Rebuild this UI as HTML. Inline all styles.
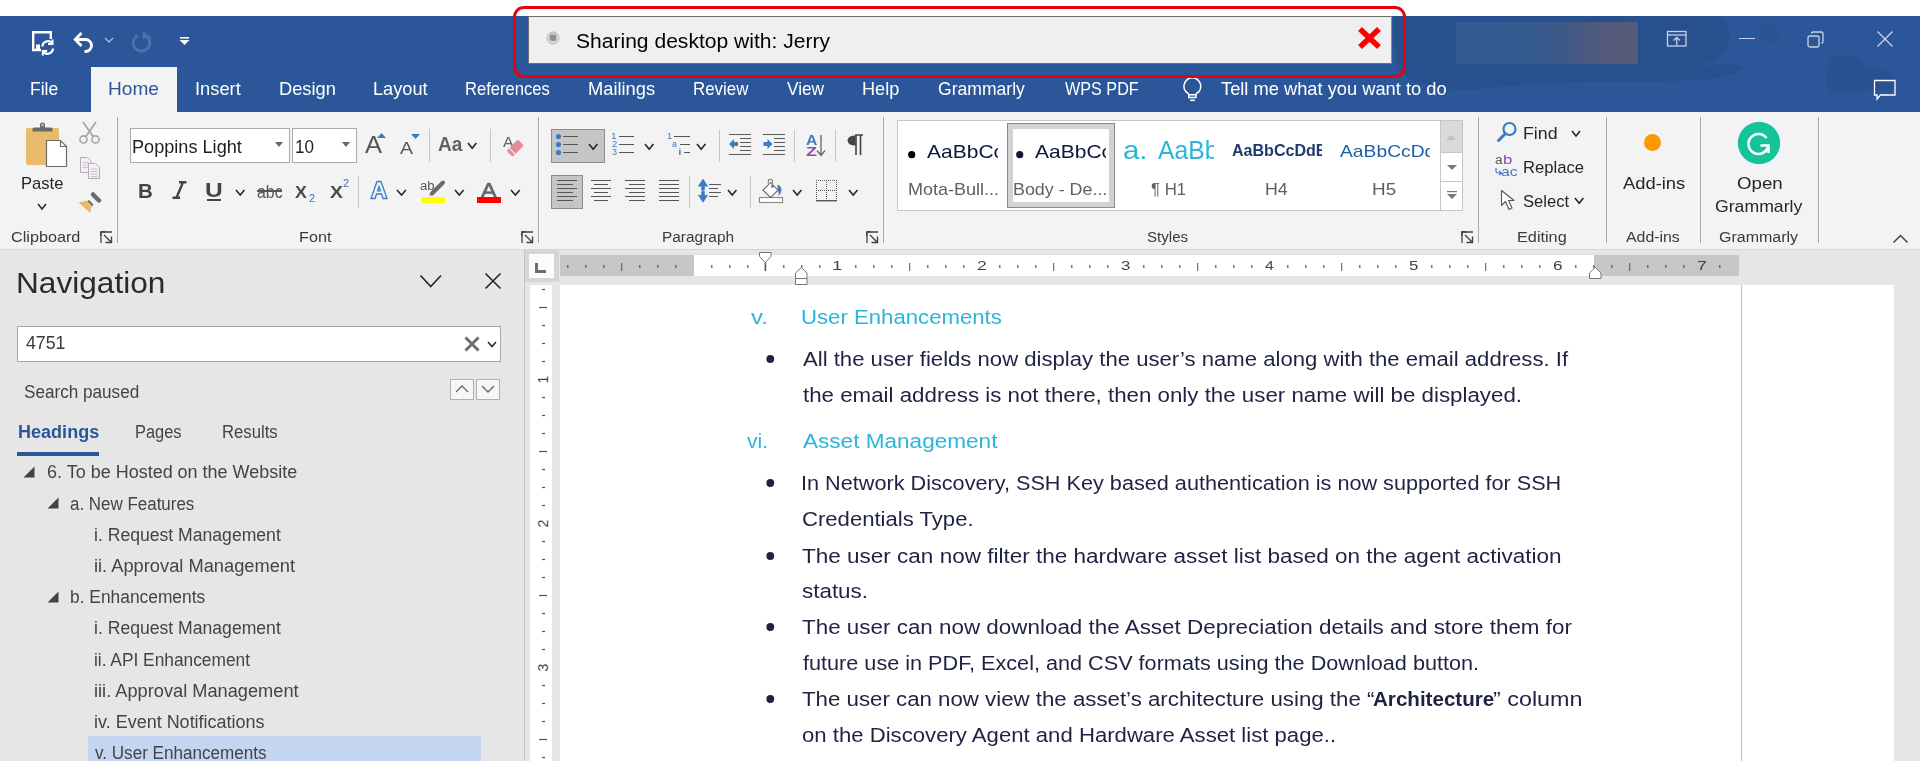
<!DOCTYPE html>
<html><head><meta charset="utf-8"><style>
html,body{margin:0;padding:0}
body{width:1920px;height:761px;overflow:hidden;position:relative;background:#f3f3f3;font-family:"Liberation Sans",sans-serif}
.t{position:absolute;white-space:nowrap;line-height:1}
.r{position:absolute;box-sizing:border-box}
.s{position:absolute;overflow:visible}
</style></head><body>
<div class="r" style="left:0px;top:0px;width:1920px;height:16px;background:#ffffff;"></div>
<div class="r" style="left:0px;top:16px;width:1920px;height:96px;background:#2b579a;"></div>
<svg class="s" style="left:0px;top:16px;" width="1920" height="96" viewBox="0 0 1920 96"><g fill="#29508e"><path d="M1395 0 H1722 Q1738 22 1722 38 Q1712 48 1690 52 Q1730 44 1744 50 Q1740 60 1700 64 Q1640 66 1590 66 Q1520 68 1490 72 Q1455 76 1430 70 Q1405 64 1398 50 Q1392 25 1395 0 Z"/><path d="M1780 0 H1660 Q1690 10 1700 0 Z"/><circle cx="1770" cy="18" r="10" opacity="0.6"/><path d="M1828 56 Q1826 40 1845 39 Q1862 39 1866 52 Q1886 50 1894 60 Q1898 70 1890 74 Q1860 74 1832 76 Q1822 70 1828 56 Z" opacity="0.8"/></g></svg>
<svg class="s" style="left:31px;top:30px;" width="24" height="24" viewBox="0 0 24 24"><path d="M10 20 H2.2 V2.2 H19.8 V9" fill="none" stroke="#fff" stroke-width="2.4"/><rect x="5" y="14.5" width="4" height="5.5" fill="#fff"/><path d="M11.3 16.5 A5.6 5.6 0 0 1 21 13" fill="none" stroke="#fff" stroke-width="2.2"/><path d="M21.5 9.5 V14 H17" fill="none" stroke="#fff" stroke-width="2"/><path d="M22 18.5 A5.6 5.6 0 0 1 12.3 22" fill="none" stroke="#fff" stroke-width="2.2"/><path d="M11.8 25.5 V21 H16.2" fill="none" stroke="#fff" stroke-width="2"/></svg>
<svg class="s" style="left:72px;top:30px;" width="26" height="24" viewBox="0 0 26 24"><path d="M4 9.5 H13.5 A6 6 0 0 1 13.5 21.5 H12.5" fill="none" stroke="#fff" stroke-width="2.8"/><path d="M9.5 3 L3.2 9.5 L9.5 16" fill="none" stroke="#fff" stroke-width="2.8"/></svg>
<svg class="s" style="left:104px;top:36px;" width="10" height="8" viewBox="0 0 10 8"><path d="M1 2 L5 6 L9 2" fill="none" stroke="#a9bcd8" stroke-width="1.3"/></svg>
<svg class="s" style="left:131px;top:30px;" width="22" height="24" viewBox="0 0 22 24"><path d="M14 5.2 A8.3 8.3 0 1 1 6.5 5.5" fill="none" stroke="#4a73ae" stroke-width="2.8"/><path d="M13 1.5 V7 H19.5" fill="none" stroke="#4a73ae" stroke-width="2.8"/></svg>
<svg class="s" style="left:178px;top:36px;" width="14" height="10" viewBox="0 0 14 10"><rect x="2" y="1" width="9" height="1.6" fill="#fff"/><path d="M1.5 4 H11.5 L6.5 9 Z" fill="#fff"/></svg>
<div class="r" style="left:528px;top:16px;width:864px;height:48px;background:#efefef;border:1px solid #6f6f6f;border-right-color:#8a8a8a;border-bottom-color:#707070"></div>
<svg class="s" style="left:546px;top:29px;" width="14" height="16" viewBox="0 0 14 16"><ellipse cx="7" cy="9" rx="6" ry="6" fill="#d6d6d6" stroke="#bdbdbd" stroke-width="1"/><ellipse cx="7" cy="6" rx="3.2" ry="3.5" fill="#c2c2c2"/><path d="M3.8 6 V11 Q7 13 10.2 11 V6" fill="#8f8f8f"/></svg>
<div class="t" style="left:576.05px;top:31.18px;font-size:20.5px;color:#000;font-weight:normal;font-style:normal;transform:scaleX(1.0272);transform-origin:0 0;">Sharing desktop with: Jerry</div>
<svg class="s" style="left:1357px;top:26px;" width="25" height="24" viewBox="0 0 25 24"><path d="M3 3 L22 21 M22 3 L3 21" stroke="#ff0000" stroke-width="5.5" stroke-linecap="butt"/></svg>
<div class="r" style="left:1456px;top:22px;width:182px;height:42px;background:linear-gradient(90deg,#345a93 0%,#355a90 38%,#3f5886 60%,#535a7c 82%,#575b79 100%)"></div>
<svg class="s" style="left:1666px;top:30px;" width="22" height="18" viewBox="0 0 22 18"><rect x="1.5" y="1.5" width="18.5" height="14.5" fill="none" stroke="#c6d1e4" stroke-width="1.3"/><path d="M1.5 5 H20" stroke="#c6d1e4" stroke-width="1.3"/><path d="M10.75 15.5 V8 M7.5 10.5 L10.75 7.5 L14 10.5" fill="none" stroke="#c6d1e4" stroke-width="1.3"/></svg>
<div class="r" style="left:1739px;top:37.5px;width:16px;height:1.2999999999999972px;background:#c6d1e4;"></div>
<svg class="s" style="left:1806px;top:30px;" width="20" height="19" viewBox="0 0 20 19"><rect x="2" y="6" width="11" height="11" rx="2" fill="none" stroke="#c6d1e4" stroke-width="1.3"/><path d="M5.5 3.5 Q5.5 2 7.5 2 H15 Q17 2 17 4 V11.5 Q17 13 15.5 13.5" fill="none" stroke="#c6d1e4" stroke-width="1.3"/></svg>
<svg class="s" style="left:1876px;top:30px;" width="18" height="18" viewBox="0 0 18 18"><path d="M1.5 1.5 L16.5 16.5 M16.5 1.5 L1.5 16.5" stroke="#c6d1e4" stroke-width="1.4"/></svg>
<svg class="s" style="left:1873px;top:79px;" width="24" height="22" viewBox="0 0 24 22"><path d="M1.5 1.5 H22 V16 H7.5 L4 20 V16 H1.5 Z" fill="none" stroke="#fff" stroke-width="1.3"/></svg>
<div class="r" style="left:91px;top:67px;width:86px;height:45px;background:#f3f3f3;"></div>
<div class="t" style="left:29.60px;top:79.58px;font-size:18.5px;color:#ffffff;font-weight:normal;font-style:normal;transform:scaleX(0.9464);transform-origin:0 0;">File</div>
<div class="t" style="left:107.97px;top:79.58px;font-size:18.5px;color:#2b579a;font-weight:normal;font-style:normal;transform:scaleX(1.0321);transform-origin:0 0;">Home</div>
<div class="t" style="left:195.35px;top:79.58px;font-size:18.5px;color:#ffffff;font-weight:normal;font-style:normal;transform:scaleX(0.9889);transform-origin:0 0;">Insert</div>
<div class="t" style="left:279.04px;top:79.58px;font-size:18.5px;color:#ffffff;font-weight:normal;font-style:normal;transform:scaleX(0.9881);transform-origin:0 0;">Design</div>
<div class="t" style="left:372.55px;top:79.58px;font-size:18.5px;color:#ffffff;font-weight:normal;font-style:normal;transform:scaleX(0.9828);transform-origin:0 0;">Layout</div>
<div class="t" style="left:464.67px;top:79.58px;font-size:18.5px;color:#ffffff;font-weight:normal;font-style:normal;transform:scaleX(0.8973);transform-origin:0 0;">References</div>
<div class="t" style="left:587.54px;top:79.58px;font-size:18.5px;color:#ffffff;font-weight:normal;font-style:normal;transform:scaleX(0.9883);transform-origin:0 0;">Mailings</div>
<div class="t" style="left:692.65px;top:79.58px;font-size:18.5px;color:#ffffff;font-weight:normal;font-style:normal;transform:scaleX(0.9122);transform-origin:0 0;">Review</div>
<div class="t" style="left:786.91px;top:79.58px;font-size:18.5px;color:#ffffff;font-weight:normal;font-style:normal;transform:scaleX(0.9324);transform-origin:0 0;">View</div>
<div class="t" style="left:862.15px;top:79.58px;font-size:18.5px;color:#ffffff;font-weight:normal;font-style:normal;transform:scaleX(0.9805);transform-origin:0 0;">Help</div>
<div class="t" style="left:938.12px;top:79.58px;font-size:18.5px;color:#ffffff;font-weight:normal;font-style:normal;transform:scaleX(0.9497);transform-origin:0 0;">Grammarly</div>
<div class="t" style="left:1064.92px;top:79.58px;font-size:18.5px;color:#ffffff;font-weight:normal;font-style:normal;transform:scaleX(0.8749);transform-origin:0 0;">WPS PDF</div>
<svg class="s" style="left:1182px;top:76px;" width="20" height="27" viewBox="0 0 20 27"><path d="M6.8 18.7 Q6.6 17.2 3.7 15.5 A8.45 8.45 0 1 1 17 15.5 Q14.1 17.2 13.9 18.7 Z" fill="none" stroke="#fff" stroke-width="1.5"/><path d="M6.8 18.7 V21.6 H13.9 V18.7" fill="none" stroke="#fff" stroke-width="1.5"/><path d="M8.3 24.3 H12.7" stroke="#fff" stroke-width="1.6"/></svg>
<div class="t" style="left:1221.13px;top:79.58px;font-size:18.5px;color:#ffffff;font-weight:normal;font-style:normal;transform:scaleX(0.9882);transform-origin:0 0;">Tell me what you want to do</div>
<div class="r" style="left:513px;top:6px;width:893px;height:72px;border:3px solid #e8000b;border-radius:11px;"></div>
<div class="r" style="left:0px;top:112px;width:1920px;height:137px;background:#f3f3f3;"></div>
<div class="r" style="left:0px;top:249px;width:1920px;height:1px;background:#d5d5d5;"></div>
<div class="r" style="left:117px;top:117px;width:1px;height:126px;background:#a8a8a8;"></div>
<div class="r" style="left:538px;top:117px;width:1px;height:126px;background:#a8a8a8;"></div>
<div class="r" style="left:883px;top:117px;width:1px;height:126px;background:#a8a8a8;"></div>
<div class="r" style="left:1478px;top:117px;width:1px;height:126px;background:#a8a8a8;"></div>
<div class="r" style="left:1606px;top:117px;width:1px;height:126px;background:#a8a8a8;"></div>
<div class="r" style="left:1700px;top:117px;width:1px;height:126px;background:#a8a8a8;"></div>
<div class="r" style="left:1818px;top:117px;width:1px;height:126px;background:#a8a8a8;"></div>
<div class="t" style="left:11.49px;top:229.32px;font-size:15.5px;color:#3a3a3a;font-weight:normal;font-style:normal;transform:scaleX(1.0456);transform-origin:0 0;">Clipboard</div>
<div class="t" style="left:299.00px;top:229.32px;font-size:15.5px;color:#3a3a3a;font-weight:normal;font-style:normal;transform:scaleX(1.0444);transform-origin:0 0;">Font</div>
<div class="t" style="left:662.27px;top:229.32px;font-size:15.5px;color:#3a3a3a;font-weight:normal;font-style:normal;transform:scaleX(0.9952);transform-origin:0 0;">Paragraph</div>
<div class="t" style="left:1147.32px;top:229.32px;font-size:15.5px;color:#3a3a3a;font-weight:normal;font-style:normal;transform:scaleX(0.9757);transform-origin:0 0;">Styles</div>
<div class="t" style="left:1517.40px;top:229.32px;font-size:15.5px;color:#3a3a3a;font-weight:normal;font-style:normal;transform:scaleX(1.0487);transform-origin:0 0;">Editing</div>
<div class="t" style="left:1626.40px;top:229.32px;font-size:15.5px;color:#3a3a3a;font-weight:normal;font-style:normal;transform:scaleX(1.0230);transform-origin:0 0;">Add-ins</div>
<div class="t" style="left:1718.50px;top:229.32px;font-size:15.5px;color:#3a3a3a;font-weight:normal;font-style:normal;transform:scaleX(1.0320);transform-origin:0 0;">Grammarly</div>
<svg class="s" style="left:100px;top:231px;" width="13" height="13" viewBox="0 0 13 13"><path d="M1 12 V1 H12" fill="none" stroke="#444" stroke-width="1.3" transform="translate(0,0)"/><path d="M0.7 0.7 V5 M0.7 0.7 H5" fill="none" stroke="#444" stroke-width="1.4"/><path d="M4 4 L11.5 11.5 M11.5 5.5 V11.5 H5.5" fill="none" stroke="#444" stroke-width="1.4"/></svg>
<svg class="s" style="left:521px;top:231px;" width="13" height="13" viewBox="0 0 13 13"><path d="M1 12 V1 H12" fill="none" stroke="#444" stroke-width="1.3" transform="translate(0,0)"/><path d="M0.7 0.7 V5 M0.7 0.7 H5" fill="none" stroke="#444" stroke-width="1.4"/><path d="M4 4 L11.5 11.5 M11.5 5.5 V11.5 H5.5" fill="none" stroke="#444" stroke-width="1.4"/></svg>
<svg class="s" style="left:866px;top:231px;" width="13" height="13" viewBox="0 0 13 13"><path d="M1 12 V1 H12" fill="none" stroke="#444" stroke-width="1.3" transform="translate(0,0)"/><path d="M0.7 0.7 V5 M0.7 0.7 H5" fill="none" stroke="#444" stroke-width="1.4"/><path d="M4 4 L11.5 11.5 M11.5 5.5 V11.5 H5.5" fill="none" stroke="#444" stroke-width="1.4"/></svg>
<svg class="s" style="left:1461px;top:231px;" width="13" height="13" viewBox="0 0 13 13"><path d="M1 12 V1 H12" fill="none" stroke="#444" stroke-width="1.3" transform="translate(0,0)"/><path d="M0.7 0.7 V5 M0.7 0.7 H5" fill="none" stroke="#444" stroke-width="1.4"/><path d="M4 4 L11.5 11.5 M11.5 5.5 V11.5 H5.5" fill="none" stroke="#444" stroke-width="1.4"/></svg>
<svg class="s" style="left:24px;top:121px;" width="46" height="50" viewBox="0 0 46 50"><rect x="2" y="7" width="33" height="37" rx="2" fill="#e9bc6b"/><path d="M8.5 10.5 V8 Q8.5 6.5 10 6.5 H16 V3.5 Q16 1.5 18.5 1.5 Q21 1.5 21 3.5 V6.5 H27 Q28.5 6.5 28.5 8 V10.5 Z" fill="#6b6b6b"/><circle cx="18.5" cy="4" r="1.3" fill="#e9bc6b"/><path d="M22.5 19.5 H36.5 L42.5 25.5 V45.5 H22.5 Z" fill="#fff" stroke="#6b6b6b" stroke-width="1.2"/><path d="M36.5 19.5 V25.5 H42.5" fill="none" stroke="#6b6b6b" stroke-width="1.2"/></svg>
<div class="t" style="left:21.37px;top:175.15px;font-size:17px;color:#262626;font-weight:normal;font-style:normal;transform:scaleX(0.9756);transform-origin:0 0;">Paste</div>
<svg class="s" style="left:37px;top:203px;" width="11" height="8" viewBox="0 0 11 8"><path d="M1 1 L5.0 6.0 L9.0 1" fill="none" stroke="#262626" stroke-width="1.5"/></svg>
<svg class="s" style="left:78px;top:121px;" width="23" height="24" viewBox="0 0 23 24"><path d="M5 1 L15.5 16 M18 1 L7.5 16" stroke="#a6a6a6" stroke-width="1.8"/><circle cx="5.5" cy="18.5" r="3.6" fill="none" stroke="#a6a6a6" stroke-width="1.6"/><circle cx="17.5" cy="18.5" r="3.6" fill="none" stroke="#a6a6a6" stroke-width="1.6"/></svg>
<svg class="s" style="left:79px;top:156px;" width="23" height="24" viewBox="0 0 23 24"><path d="M1.5 1.5 H8.5 L12 5 V16.5 H1.5 Z" fill="#f4f0f4" stroke="#b9a9b9" stroke-width="1"/><path d="M3.5 6.5 H10 M3.5 9 H10 M3.5 11.5 H10" stroke="#c9b9c9" stroke-width="0.9"/><path d="M9.5 7.5 H16.5 L20.5 11.5 V22.5 H9.5 Z" fill="#f4f0f4" stroke="#b9a9b9" stroke-width="1"/><path d="M11.5 13 H18.5 M11.5 15.5 H18.5 M11.5 18 H18.5 M11.5 20.5 H18.5" stroke="#c9b9c9" stroke-width="0.9"/></svg>
<svg class="s" style="left:77px;top:191px;" width="25" height="23" viewBox="0 0 25 23"><path d="M16 3.5 L22 9.5" stroke="#6b6b6b" stroke-width="4.5" stroke-linecap="round"/><path d="M12 9 L16.5 13.5 L15 15.5 L10 10.5 Z" fill="#6b6b6b"/><path d="M1.5 11.5 L10 9.5 L15 15 L13 22 Z" fill="#e9bc6b"/></svg>
<div class="r" style="left:130px;top:128px;width:160px;height:35px;background:#fff;border:1px solid #ababab"></div>
<div class="r" style="left:292px;top:128px;width:65px;height:35px;background:#fff;border:1px solid #ababab"></div>
<div class="t" style="left:132.35px;top:137.70px;font-size:18px;color:#1e1e1e;font-weight:normal;font-style:normal;transform:scaleX(1.0069);transform-origin:0 0;">Poppins Light</div>
<svg class="s" style="left:275px;top:142px;" width="8" height="5" viewBox="0 0 8 5"><path d="M0 0 H8 L4 5 Z" fill="#666"/></svg>
<div class="t" style="left:295.33px;top:137.70px;font-size:18px;color:#1e1e1e;font-weight:normal;font-style:normal;transform:scaleX(0.9444);transform-origin:0 0;">10</div>
<svg class="s" style="left:342px;top:142px;" width="8" height="5" viewBox="0 0 8 5"><path d="M0 0 H8 L4 5 Z" fill="#666"/></svg>
<div class="t" style="left:364.50px;top:134.45px;font-size:23px;color:#555;font-weight:normal;font-style:normal;transform:scaleX(1.1115);transform-origin:0 0;">A</div>
<svg class="s" style="left:377px;top:133px;" width="9" height="5" viewBox="0 0 9 5"><path d="M0 5 H9 L4.5 0 Z" fill="#3f7bc3"/></svg>
<div class="t" style="left:399.50px;top:139.55px;font-size:17px;color:#555;font-weight:normal;font-style:normal;transform:scaleX(1.1499);transform-origin:0 0;">A</div>
<svg class="s" style="left:411px;top:134px;" width="9" height="5" viewBox="0 0 9 5"><path d="M0 0 H9 L4.5 5 Z" fill="#3f7bc3"/></svg>
<div class="r" style="left:429px;top:129px;width:1px;height:33px;background:#c6c6c6;"></div>
<div class="t" style="left:438.02px;top:134.00px;font-size:20px;color:#626262;font-weight:bold;font-style:normal;transform:scaleX(0.9524);transform-origin:0 0;">Aa</div>
<svg class="s" style="left:467px;top:142px;" width="11" height="8" viewBox="0 0 11 8"><path d="M1 1 L5.2 6.2 L9.4 1" fill="none" stroke="#262626" stroke-width="1.6"/></svg>
<div class="r" style="left:490px;top:129px;width:1px;height:33px;background:#c6c6c6;"></div>
<div class="t" style="left:503.00px;top:133.75px;font-size:15px;color:#666;font-weight:normal;font-style:normal;transform:scaleX(1.0526);transform-origin:0 0;">A</div>
<svg class="s" style="left:504px;top:138px;" width="20" height="19" viewBox="0 0 20 19"><g transform="rotate(-45 11 10)"><rect x="3" y="6" width="16" height="8.5" rx="1.5" fill="#e58a9a"/><rect x="6.2" y="6" width="1.2" height="8.5" fill="#f3f3f3"/></g></svg>
<div class="t" style="left:138.17px;top:180.15px;font-size:21px;color:#444;font-weight:bold;font-style:normal;transform:scaleX(0.9758);transform-origin:0 0;">B</div>
<svg class="s" style="left:172px;top:181px;" width="15" height="18" viewBox="0 0 15 18"><path d="M7 1.2 H14.5 M0.5 16.8 H8 M11 1.2 L4.5 16.8" fill="none" stroke="#444" stroke-width="2.4"/></svg>
<div class="t" style="left:204.66px;top:180.00px;font-size:20px;color:#444;font-weight:normal;font-style:normal;transform:scaleX(1.2281);transform-origin:0 0;font-weight:600;">U</div>
<div class="r" style="left:207px;top:199px;width:14px;height:2px;background:#444;"></div>
<svg class="s" style="left:235px;top:189px;" width="11" height="8" viewBox="0 0 11 8"><path d="M1 1 L5.2 6.0 L9.4 1" fill="none" stroke="#262626" stroke-width="1.6"/></svg>
<div class="t" style="left:256.87px;top:182.70px;font-size:18px;color:#555;font-weight:normal;font-style:normal;transform:scaleX(0.8810);transform-origin:0 0;">abc</div>
<div class="r" style="left:257px;top:190px;width:25px;height:1.5px;background:#555;"></div>
<div class="t" style="left:295.32px;top:184.90px;font-size:16px;color:#4a4a4a;font-weight:bold;font-style:normal;transform:scaleX(1.1143);transform-origin:0 0;">X</div>
<div class="t" style="left:309.45px;top:193.07px;font-size:10.5px;color:#3a74bd;font-weight:normal;font-style:normal;transform:scaleX(1.0466);transform-origin:0 0;">2</div>
<div class="t" style="left:329.81px;top:184.90px;font-size:16px;color:#4a4a4a;font-weight:bold;font-style:normal;transform:scaleX(1.2112);transform-origin:0 0;">X</div>
<div class="t" style="left:343.45px;top:177.88px;font-size:10.5px;color:#3a74bd;font-weight:normal;font-style:normal;transform:scaleX(1.0466);transform-origin:0 0;">2</div>
<div class="r" style="left:358px;top:176px;width:1px;height:32px;background:#c6c6c6;"></div>
<svg class="s" style="left:369px;top:180px;" width="20" height="20" viewBox="0 0 20 20"><path d="M2 18.5 L8 1.5 H12 L18 18.5 H14 L12.5 14 H7.5 L6 18.5 Z M8.6 10.8 H11.4 L10 6.5 Z" fill="#eaf2fb" stroke="#3f7bc3" stroke-width="1.3"/></svg>
<svg class="s" style="left:396px;top:189px;" width="12" height="8" viewBox="0 0 12 8"><path d="M1 1 L5.5 6.0 L9.9 1" fill="none" stroke="#262626" stroke-width="1.6"/></svg>
<div class="t" style="left:420.48px;top:179.80px;font-size:12px;color:#555;font-weight:normal;font-style:normal;transform:scaleX(1.0922);transform-origin:0 0;">ab</div>
<svg class="s" style="left:426px;top:180px;" width="20" height="17" viewBox="0 0 20 17"><path d="M17 2.5 L6 13.5" stroke="#6a6a6a" stroke-width="4" stroke-linecap="round"/><path d="M3 16 L6 12 L8 14 Z" fill="#6a6a6a"/></svg>
<div class="r" style="left:421px;top:197px;width:24px;height:6px;background:#ffff00;"></div>
<svg class="s" style="left:454px;top:189px;" width="12" height="8" viewBox="0 0 12 8"><path d="M1 1 L5.3 6.0 L9.7 1" fill="none" stroke="#262626" stroke-width="1.6"/></svg>
<div class="t" style="left:480.50px;top:178.85px;font-size:21px;color:#666;font-weight:normal;font-style:normal;transform:scaleX(1.1099);transform-origin:0 0;-webkit-text-stroke:0.6px #666;">A</div>
<div class="r" style="left:477px;top:197px;width:24px;height:6px;background:#ff0000;"></div>
<svg class="s" style="left:510px;top:189px;" width="12" height="8" viewBox="0 0 12 8"><path d="M1 1 L5.4 6.0 L9.8 1" fill="none" stroke="#262626" stroke-width="1.6"/></svg>
<div class="r" style="left:551px;top:129px;width:54px;height:34px;background:#c5c5c5;border:1px solid #8c8c8c"></div>
<svg class="s" style="left:555px;top:133px;" width="25" height="6" viewBox="0 0 25 6"><circle cx="3.5" cy="3.5" r="2.6" fill="#3f7bc3"/><rect x="8" y="3" width="15" height="1" fill="#555"/></svg>
<svg class="s" style="left:555px;top:141px;" width="25" height="6" viewBox="0 0 25 6"><circle cx="3.5" cy="3.5" r="2.6" fill="#3f7bc3"/><rect x="8" y="3" width="15" height="1" fill="#555"/></svg>
<svg class="s" style="left:555px;top:149px;" width="25" height="6" viewBox="0 0 25 6"><circle cx="3.5" cy="3.5" r="2.6" fill="#3f7bc3"/><rect x="8" y="3" width="15" height="1" fill="#555"/></svg>
<svg class="s" style="left:588px;top:143px;" width="11" height="8" viewBox="0 0 11 8"><path d="M1 1 L5.2 6.3 L9.4 1" fill="none" stroke="#262626" stroke-width="1.6"/></svg>
<div class="t" style="left:611.26px;top:131.85px;font-size:9px;color:#3f7bc3;font-weight:normal;font-style:normal;transform:scaleX(1.0983);transform-origin:0 0;">1</div>
<div class="r" style="left:619px;top:136px;width:15px;height:1px;background:#555;"></div>
<div class="t" style="left:611.53px;top:139.85px;font-size:9px;color:#3f7bc3;font-weight:normal;font-style:normal;transform:scaleX(1.0501);transform-origin:0 0;">2</div>
<div class="r" style="left:619px;top:144px;width:15px;height:1px;background:#555;"></div>
<div class="t" style="left:611.64px;top:147.85px;font-size:9px;color:#3f7bc3;font-weight:normal;font-style:normal;transform:scaleX(1.0058);transform-origin:0 0;">3</div>
<div class="r" style="left:619px;top:152px;width:15px;height:1px;background:#555;"></div>
<svg class="s" style="left:644px;top:143px;" width="11" height="8" viewBox="0 0 11 8"><path d="M1 1 L5.2 6.3 L9.4 1" fill="none" stroke="#262626" stroke-width="1.6"/></svg>
<div class="t" style="left:666.81px;top:131.85px;font-size:9px;color:#3f7bc3;font-weight:normal;font-style:normal;transform:scaleX(1.0217);transform-origin:0 0;">1</div>
<div class="t" style="left:672.15px;top:139.85px;font-size:9px;color:#3f7bc3;font-weight:normal;font-style:normal;transform:scaleX(0.9709);transform-origin:0 0;">a</div>
<div class="t" style="left:678.42px;top:147.85px;font-size:9px;color:#3f7bc3;font-weight:normal;font-style:normal;transform:scaleX(1.8519);transform-origin:0 0;">i</div>
<div class="r" style="left:674px;top:136px;width:16px;height:1px;background:#555;"></div>
<div class="r" style="left:680px;top:144px;width:10px;height:1px;background:#555;"></div>
<div class="r" style="left:684px;top:152px;width:6px;height:1px;background:#555;"></div>
<svg class="s" style="left:696px;top:143px;" width="11" height="8" viewBox="0 0 11 8"><path d="M1 1 L5.2 6.3 L9.4 1" fill="none" stroke="#262626" stroke-width="1.6"/></svg>
<div class="r" style="left:719px;top:130px;width:1px;height:32px;background:#c6c6c6;"></div>
<svg class="s" style="left:728px;top:133px;" width="24" height="23" viewBox="0 0 24 23"><path d="M1 1.5 H23 M12 5.5 H23 M12 9.5 H23 M12 13.5 H23 M12 17.5 H23 M1 21.5 H23" stroke="#5a5a5a" stroke-width="1.2"/><path d="M1 11 L6 6 V9 H10 V13 H6 V16 Z" fill="#3f7bc3"/></svg>
<svg class="s" style="left:762px;top:133px;" width="24" height="23" viewBox="0 0 24 23"><path d="M1 1.5 H23 M12 5.5 H23 M12 9.5 H23 M12 13.5 H23 M12 17.5 H23 M1 21.5 H23" stroke="#5a5a5a" stroke-width="1.2"/><path d="M10.5 11 L5.5 6 V9 H1.5 V13 H5.5 V16 Z" fill="#3f7bc3"/></svg>
<div class="r" style="left:794px;top:130px;width:1px;height:32px;background:#c6c6c6;"></div>
<div class="t" style="left:805.81px;top:133.40px;font-size:14px;color:#3f7bc3;font-weight:bold;font-style:normal;transform:scaleX(1.1194);transform-origin:0 0;">A</div>
<div class="t" style="left:805.96px;top:145.25px;font-size:13px;color:#8a4bb5;font-weight:bold;font-style:normal;transform:scaleX(1.3860);transform-origin:0 0;">Z</div>
<svg class="s" style="left:816px;top:134px;" width="10" height="23" viewBox="0 0 10 23"><path d="M5 1 V21 M1 16.5 L5 21.5 L9 16.5" fill="none" stroke="#666" stroke-width="1.3"/></svg>
<div class="r" style="left:835px;top:130px;width:1px;height:32px;background:#c6c6c6;"></div>
<svg class="s" style="left:846px;top:134px;" width="18" height="22" viewBox="0 0 18 22"><path d="M9 1 H17 M10 1 V21 M14.5 1 V21" stroke="#444" stroke-width="1.6"/><path d="M9.5 1.5 Q2 1.5 1.5 6.5 Q2 11.5 9.5 11.5 Z" fill="#444"/></svg>
<div class="r" style="left:551px;top:175px;width:32px;height:34px;background:#c5c5c5;border:1px solid #8c8c8c"></div>
<svg class="s" style="left:557px;top:180px;" width="21" height="24" viewBox="0 0 21 24"><rect x="0" y="0" width="20" height="1" fill="#555"/><rect x="0" y="4" width="16" height="1" fill="#555"/><rect x="0" y="8" width="20" height="1" fill="#555"/><rect x="0" y="12" width="16" height="1" fill="#555"/><rect x="0" y="16" width="20" height="1" fill="#555"/><rect x="0" y="20" width="16" height="1" fill="#555"/></svg>
<svg class="s" style="left:591px;top:180px;" width="21" height="24" viewBox="0 0 21 24"><rect x="0" y="0" width="20" height="1" fill="#555"/><rect x="3" y="4" width="14" height="1" fill="#555"/><rect x="0" y="8" width="20" height="1" fill="#555"/><rect x="3" y="12" width="14" height="1" fill="#555"/><rect x="0" y="16" width="20" height="1" fill="#555"/><rect x="3" y="20" width="14" height="1" fill="#555"/></svg>
<svg class="s" style="left:625px;top:180px;" width="21" height="24" viewBox="0 0 21 24"><rect x="0" y="0" width="20" height="1" fill="#555"/><rect x="4" y="4" width="16" height="1" fill="#555"/><rect x="0" y="8" width="20" height="1" fill="#555"/><rect x="4" y="12" width="16" height="1" fill="#555"/><rect x="0" y="16" width="20" height="1" fill="#555"/><rect x="4" y="20" width="16" height="1" fill="#555"/></svg>
<svg class="s" style="left:659px;top:180px;" width="21" height="24" viewBox="0 0 21 24"><rect x="0" y="0" width="20" height="1" fill="#555"/><rect x="0" y="4" width="20" height="1" fill="#555"/><rect x="0" y="8" width="20" height="1" fill="#555"/><rect x="0" y="12" width="20" height="1" fill="#555"/><rect x="0" y="16" width="20" height="1" fill="#555"/><rect x="0" y="20" width="20" height="1" fill="#555"/></svg>
<div class="r" style="left:689px;top:176px;width:1px;height:32px;background:#c6c6c6;"></div>
<svg class="s" style="left:697px;top:178px;" width="26" height="26" viewBox="0 0 26 26"><path d="M6 1.2 L10.6 8.2 Q8.5 7.6 7.3 8.4 V12.2 H4.7 V8.4 Q3.5 7.6 1.4 8.2 Z M6 24.2 L10.6 17.2 Q8.5 17.8 7.3 17 V13.6 H4.7 V17 Q3.5 17.8 1.4 17.2 Z" fill="#3f7bc3" stroke="#3f7bc3" stroke-width="0.8" stroke-linejoin="round"/><path d="M12 6.5 H24 M12 10.5 H21 M12 14.5 H24 M12 18.5 H21" stroke="#5a5a5a" stroke-width="1.1"/></svg>
<svg class="s" style="left:727px;top:189px;" width="11" height="8" viewBox="0 0 11 8"><path d="M1 1 L5.2 6.0 L9.5 1" fill="none" stroke="#262626" stroke-width="1.6"/></svg>
<div class="r" style="left:750px;top:176px;width:1px;height:32px;background:#c6c6c6;"></div>
<svg class="s" style="left:758px;top:178px;" width="26" height="26" viewBox="0 0 26 26"><rect x="1.5" y="19.5" width="23" height="5" fill="#fff" stroke="#888" stroke-width="1.1"/><path d="M5 12.2 L12.6 4.7 L20 12.2 L12.6 19.5 Z" fill="#fff" stroke="#666" stroke-width="1.1"/><path d="M10.3 5.5 V2.8 Q10.3 1.3 12.3 1.3 Q14.3 1.3 14.3 2.8 V8" fill="none" stroke="#777" stroke-width="1.1"/><circle cx="14.3" cy="8.5" r="1.2" fill="#666"/><path d="M19.5 6.5 Q23.5 8 23.5 12 Q23.3 15.5 20.5 18 Q21 14 19.8 12 Z" fill="#3f7bc3"/></svg>
<svg class="s" style="left:792px;top:189px;" width="11" height="8" viewBox="0 0 11 8"><path d="M1 1 L5.2 6.0 L9.4 1" fill="none" stroke="#262626" stroke-width="1.6"/></svg>
<svg class="s" style="left:815px;top:179px;" width="23" height="23" viewBox="0 0 23 23"><g fill="#555"><rect x="1" y="1" width="1" height="1"/><rect x="1" y="11" width="1" height="1"/><rect x="3" y="1" width="1" height="1"/><rect x="3" y="11" width="1" height="1"/><rect x="5" y="1" width="1" height="1"/><rect x="5" y="11" width="1" height="1"/><rect x="7" y="1" width="1" height="1"/><rect x="7" y="11" width="1" height="1"/><rect x="9" y="1" width="1" height="1"/><rect x="9" y="11" width="1" height="1"/><rect x="11" y="1" width="1" height="1"/><rect x="11" y="11" width="1" height="1"/><rect x="13" y="1" width="1" height="1"/><rect x="13" y="11" width="1" height="1"/><rect x="15" y="1" width="1" height="1"/><rect x="15" y="11" width="1" height="1"/><rect x="17" y="1" width="1" height="1"/><rect x="17" y="11" width="1" height="1"/><rect x="19" y="1" width="1" height="1"/><rect x="19" y="11" width="1" height="1"/><rect x="21" y="1" width="1" height="1"/><rect x="21" y="11" width="1" height="1"/><rect x="1" y="1" width="1" height="1"/><rect x="11" y="1" width="1" height="1"/><rect x="21" y="1" width="1" height="1"/><rect x="1" y="3" width="1" height="1"/><rect x="11" y="3" width="1" height="1"/><rect x="21" y="3" width="1" height="1"/><rect x="1" y="5" width="1" height="1"/><rect x="11" y="5" width="1" height="1"/><rect x="21" y="5" width="1" height="1"/><rect x="1" y="7" width="1" height="1"/><rect x="11" y="7" width="1" height="1"/><rect x="21" y="7" width="1" height="1"/><rect x="1" y="9" width="1" height="1"/><rect x="11" y="9" width="1" height="1"/><rect x="21" y="9" width="1" height="1"/><rect x="1" y="11" width="1" height="1"/><rect x="11" y="11" width="1" height="1"/><rect x="21" y="11" width="1" height="1"/><rect x="1" y="13" width="1" height="1"/><rect x="11" y="13" width="1" height="1"/><rect x="21" y="13" width="1" height="1"/><rect x="1" y="15" width="1" height="1"/><rect x="11" y="15" width="1" height="1"/><rect x="21" y="15" width="1" height="1"/><rect x="1" y="17" width="1" height="1"/><rect x="11" y="17" width="1" height="1"/><rect x="21" y="17" width="1" height="1"/><rect x="1" y="19" width="1" height="1"/><rect x="11" y="19" width="1" height="1"/><rect x="21" y="19" width="1" height="1"/></g><rect x="1" y="21" width="21" height="1.4" fill="#555"/></svg>
<svg class="s" style="left:848px;top:189px;" width="11" height="8" viewBox="0 0 11 8"><path d="M1 1 L5.2 6.0 L9.5 1" fill="none" stroke="#262626" stroke-width="1.6"/></svg>
<div class="r" style="left:897px;top:120px;width:566px;height:91px;background:#fff;border:1px solid #c6c6c6"></div>
<div class="r" style="left:1007px;top:123px;width:108px;height:85px;border:1px solid #8a8a8a;box-shadow:inset 0 0 0 5px #d2d2d2"></div>
<div class="r" style="left:1440px;top:120px;width:23px;height:33px;background:#dadada;border:1px solid #c6c6c6"></div>
<div class="r" style="left:1440px;top:152px;width:23px;height:30px;background:#fff;border:1px solid #c6c6c6"></div>
<div class="r" style="left:1440px;top:181px;width:23px;height:30px;background:#fff;border:1px solid #c6c6c6"></div>
<svg class="s" style="left:1446px;top:135px;" width="10" height="6" viewBox="0 0 10 6"><path d="M0 5 H10 L5 0 Z" fill="#c0c0c0"/></svg>
<svg class="s" style="left:1447px;top:165px;" width="10" height="6" viewBox="0 0 10 6"><path d="M0 0 H10 L5 5 Z" fill="#777"/></svg>
<svg class="s" style="left:1447px;top:191px;" width="10" height="9" viewBox="0 0 10 9"><rect x="0" y="0" width="10" height="1.2" fill="#777"/><path d="M0 3 H10 L5 8 Z" fill="#777"/></svg>
<div style="position:absolute;left:900px;top:125px;width:98px;height:45px;overflow:hidden">
<svg class="s" style="left:8px;top:26px;" width="8" height="8" viewBox="0 0 8 8"><circle cx="3.7" cy="3.7" r="3.6" fill="#000"/></svg>
<div class="t" style="left:27.00px;top:16.55px;font-size:19px;color:#10163a;font-weight:normal;font-style:normal;transform:scaleX(1.1055);transform-origin:0 0;">AaBbCcDd</div>
</div>
<div style="position:absolute;left:1013px;top:125px;width:93px;height:45px;overflow:hidden">
<svg class="s" style="left:3px;top:26px;" width="8" height="8" viewBox="0 0 8 8"><circle cx="3.7" cy="3.7" r="3.6" fill="#10163a"/></svg>
<div class="t" style="left:22.00px;top:16.55px;font-size:19px;color:#10163a;font-weight:normal;font-style:normal;transform:scaleX(1.1055);transform-origin:0 0;">AaBbCcDd</div>
</div>
<div class="t" style="left:907.56px;top:180.95px;font-size:17px;color:#5f5f5f;font-weight:normal;font-style:normal;transform:scaleX(1.0597);transform-origin:0 0;">Mota-Bull...</div>
<div class="t" style="left:1013.37px;top:180.95px;font-size:17px;color:#5f5f5f;font-weight:normal;font-style:normal;transform:scaleX(1.0509);transform-origin:0 0;">Body - De...</div>
<div style="position:absolute;left:1120px;top:125px;width:94px;height:45px;overflow:hidden">
<div class="t" style="left:2.62px;top:12.55px;font-size:25px;color:#2bb5d9;font-weight:normal;font-style:normal;transform:scaleX(1.1771);transform-origin:0 0;">a.</div>
<div class="t" style="left:38.40px;top:12.55px;font-size:25px;color:#2bb5d9;font-weight:normal;font-style:normal;transform:scaleX(0.9877);transform-origin:0 0;">AaBbCc</div>
</div>
<div class="t" style="left:1150.73px;top:180.95px;font-size:17px;color:#5f5f5f;font-weight:normal;font-style:normal;transform:scaleX(0.9858);transform-origin:0 0;">¶ H1</div>
<div style="position:absolute;left:1225px;top:125px;width:97px;height:45px;overflow:hidden">
<div class="t" style="left:6.60px;top:18.40px;font-size:16px;color:#1e3a6f;font-weight:bold;font-style:normal;transform:scaleX(1.0023);transform-origin:0 0;">AaBbCcDdEe</div>
</div>
<div class="t" style="left:1264.58px;top:180.95px;font-size:17px;color:#5f5f5f;font-weight:normal;font-style:normal;transform:scaleX(1.0452);transform-origin:0 0;">H4</div>
<div style="position:absolute;left:1335px;top:125px;width:95px;height:45px;overflow:hidden">
<div class="t" style="left:4.90px;top:17.55px;font-size:17px;color:#1b5fa6;font-weight:normal;font-style:normal;transform:scaleX(1.1333);transform-origin:0 0;">AaBbCcDdEe</div>
</div>
<div class="t" style="left:1372.09px;top:181.25px;font-size:17px;color:#5f5f5f;font-weight:normal;font-style:normal;transform:scaleX(1.1103);transform-origin:0 0;">H5</div>
<svg class="s" style="left:1496px;top:121px;" width="22" height="22" viewBox="0 0 22 22"><circle cx="13.5" cy="8" r="6" fill="none" stroke="#3f7bc3" stroke-width="2.2"/><path d="M9.5 12.5 L2.5 19.5" stroke="#3f7bc3" stroke-width="3" stroke-linecap="round"/></svg>
<div class="t" style="left:1522.58px;top:125.05px;font-size:17px;color:#262626;font-weight:normal;font-style:normal;transform:scaleX(1.0458);transform-origin:0 0;">Find</div>
<svg class="s" style="left:1571px;top:130px;" width="11" height="8" viewBox="0 0 11 8"><path d="M1 1 L5.0 6.0 L9.0 1" fill="none" stroke="#262626" stroke-width="1.6"/></svg>
<div class="t" style="left:1494.96px;top:154.30px;font-size:12px;color:#555;font-weight:normal;font-style:normal;transform:scaleX(1.1327);transform-origin:0 0;">a</div>
<div class="t" style="left:1502.92px;top:154.30px;font-size:12px;color:#8a4bb5;font-weight:normal;font-style:normal;transform:scaleX(1.3889);transform-origin:0 0;">b</div>
<div class="t" style="left:1501.37px;top:164.95px;font-size:13px;color:#3f7bc3;font-weight:normal;font-style:normal;transform:scaleX(1.2044);transform-origin:0 0;">ac</div>
<svg class="s" style="left:1495px;top:168px;" width="8" height="8" viewBox="0 0 8 8"><path d="M1 0 V3.5 Q1 5 3 5 H6 M4 3 L6.5 5 L4 7" fill="none" stroke="#3f7bc3" stroke-width="1.2"/></svg>
<div class="t" style="left:1522.67px;top:159.05px;font-size:17px;color:#262626;font-weight:normal;font-style:normal;transform:scaleX(0.9790);transform-origin:0 0;">Replace</div>
<svg class="s" style="left:1500px;top:189px;" width="16" height="23" viewBox="0 0 16 23"><path d="M1.5 1.5 V16.5 L5.5 12.5 L9 20.5 L12 19 L8.5 11.5 L14 11.5 Z" fill="#fff" stroke="#555" stroke-width="1.1" stroke-linejoin="round"/></svg>
<div class="t" style="left:1522.75px;top:193.15px;font-size:17px;color:#262626;font-weight:normal;font-style:normal;transform:scaleX(0.9757);transform-origin:0 0;">Select</div>
<svg class="s" style="left:1574px;top:197px;" width="11" height="8" viewBox="0 0 11 8"><path d="M1 1 L5.2 6.3 L9.4 1" fill="none" stroke="#262626" stroke-width="1.6"/></svg>
<div class="r" style="left:1644px;top:134px;width:17px;height:17px;border-radius:50%;background:#ff9800;filter:blur(0.6px)"></div>
<div class="t" style="left:1622.80px;top:175.05px;font-size:17px;color:#262626;font-weight:normal;font-style:normal;transform:scaleX(1.0800);transform-origin:0 0;">Add-ins</div>
<svg class="s" style="left:1737px;top:121px;" width="44" height="44" viewBox="0 0 44 44"><circle cx="22" cy="22" r="21.2" fill="#15c39a"/><path d="M29.5 17 A10 10 0 1 0 31 26" fill="none" stroke="#fff" stroke-width="2.6"/><path d="M23.5 24.5 H31.5 V32" fill="none" stroke="#fff" stroke-width="2.6"/></svg>
<div class="t" style="left:1737.36px;top:175.05px;font-size:17px;color:#262626;font-weight:normal;font-style:normal;transform:scaleX(1.1009);transform-origin:0 0;">Open</div>
<div class="t" style="left:1715.32px;top:198.45px;font-size:17px;color:#262626;font-weight:normal;font-style:normal;transform:scaleX(1.0383);transform-origin:0 0;">Grammarly</div>
<svg class="s" style="left:1892px;top:234px;" width="17" height="10" viewBox="0 0 17 10"><path d="M1.5 8.5 L8.5 1.5 L15.5 8.5" fill="none" stroke="#444" stroke-width="1.5"/></svg>
<div class="r" style="left:0px;top:250px;width:524px;height:511px;background:#e6e6e6;"></div>
<div class="r" style="left:524px;top:250px;width:1px;height:511px;background:#c3c3c3;"></div>
<div class="t" style="left:16.27px;top:268.10px;font-size:30px;color:#2a2a2a;font-weight:normal;font-style:normal;transform:scaleX(1.0539);transform-origin:0 0;">Navigation</div>
<svg class="s" style="left:419px;top:274px;" width="24" height="15" viewBox="0 0 24 15"><path d="M1.5 1.5 L11.75 12.5 L22 1.5" fill="none" stroke="#262626" stroke-width="1.6"/></svg>
<svg class="s" style="left:484px;top:272px;" width="18" height="18" viewBox="0 0 18 18"><path d="M1.5 1.5 L16.5 16.5 M16.5 1.5 L1.5 16.5" stroke="#262626" stroke-width="1.6"/></svg>
<div class="r" style="left:17px;top:326px;width:484px;height:36px;background:#fff;border:1px solid #a8a8a8"></div>
<div class="t" style="left:25.65px;top:334.40px;font-size:18px;color:#3a3a3a;font-weight:normal;font-style:normal;transform:scaleX(0.9851);transform-origin:0 0;">4751</div>
<svg class="s" style="left:463px;top:335px;" width="18" height="18" viewBox="0 0 18 18"><path d="M2.5 2.5 L15.5 15.5 M15.5 2.5 L2.5 15.5" stroke="#6e6e6e" stroke-width="3"/></svg>
<svg class="s" style="left:487px;top:341px;" width="10" height="7" viewBox="0 0 10 7"><path d="M1 1 L5 5.5 L9 1" fill="none" stroke="#262626" stroke-width="1.5"/></svg>
<div class="t" style="left:23.93px;top:382.50px;font-size:18px;color:#444;font-weight:normal;font-style:normal;transform:scaleX(0.9515);transform-origin:0 0;">Search paused</div>
<div class="r" style="left:450px;top:379px;width:24px;height:21px;background:#f6f6f6;border:1px solid #b0b0b0"></div>
<div class="r" style="left:476px;top:379px;width:24px;height:21px;background:#f6f6f6;border:1px solid #b0b0b0"></div>
<svg class="s" style="left:454px;top:384px;" width="16" height="10" viewBox="0 0 16 10"><path d="M2 8 L8 2 L14 8" fill="none" stroke="#666" stroke-width="1.3"/></svg>
<svg class="s" style="left:480px;top:384px;" width="16" height="10" viewBox="0 0 16 10"><path d="M2 2 L8 8 L14 2" fill="none" stroke="#666" stroke-width="1.3"/></svg>
<div class="t" style="left:17.53px;top:422.70px;font-size:18px;color:#2b579a;font-weight:bold;font-style:normal;transform:scaleX(1.0024);transform-origin:0 0;">Headings</div>
<div class="r" style="left:17px;top:452px;width:82px;height:4px;background:#2b579a;"></div>
<div class="t" style="left:135.39px;top:422.70px;font-size:18px;color:#444;font-weight:normal;font-style:normal;transform:scaleX(0.9109);transform-origin:0 0;">Pages</div>
<div class="t" style="left:222.36px;top:422.70px;font-size:18px;color:#444;font-weight:normal;font-style:normal;transform:scaleX(0.9282);transform-origin:0 0;">Results</div>
<div class="r" style="left:88px;top:736px;width:393px;height:25px;background:#c3d5f0;"></div>
<div class="t" style="left:46.60px;top:463.40px;font-size:18px;color:#444;font-weight:normal;font-style:normal;transform:scaleX(0.9990);transform-origin:0 0;">6. To be Hosted on the Website</div>
<svg class="s" style="left:23px;top:465.7px;" width="12" height="12" viewBox="0 0 12 12"><path d="M11.5 0.5 V11.5 H0.5 Z" fill="#444"/></svg>
<div class="t" style="left:70.32px;top:495.00px;font-size:18px;color:#444;font-weight:normal;font-style:normal;transform:scaleX(0.9412);transform-origin:0 0;">a. New Features</div>
<svg class="s" style="left:47px;top:497.3px;" width="12" height="12" viewBox="0 0 12 12"><path d="M11.5 0.5 V11.5 H0.5 Z" fill="#444"/></svg>
<div class="t" style="left:94.06px;top:526.10px;font-size:18px;color:#444;font-weight:normal;font-style:normal;transform:scaleX(0.9773);transform-origin:0 0;">i. Request Management</div>
<div class="t" style="left:94.01px;top:557.20px;font-size:18px;color:#444;font-weight:normal;font-style:normal;transform:scaleX(1.0151);transform-origin:0 0;">ii. Approval Management</div>
<div class="t" style="left:69.87px;top:588.30px;font-size:18px;color:#444;font-weight:normal;font-style:normal;transform:scaleX(0.9651);transform-origin:0 0;">b. Enhancements</div>
<svg class="s" style="left:47px;top:590.6px;" width="12" height="12" viewBox="0 0 12 12"><path d="M11.5 0.5 V11.5 H0.5 Z" fill="#444"/></svg>
<div class="t" style="left:94.06px;top:619.40px;font-size:18px;color:#444;font-weight:normal;font-style:normal;transform:scaleX(0.9773);transform-origin:0 0;">i. Request Management</div>
<div class="t" style="left:94.07px;top:650.50px;font-size:18px;color:#444;font-weight:normal;font-style:normal;transform:scaleX(0.9625);transform-origin:0 0;">ii. API Enhancement</div>
<div class="t" style="left:94.02px;top:681.60px;font-size:18px;color:#444;font-weight:normal;font-style:normal;transform:scaleX(1.0125);transform-origin:0 0;">iii. Approval Management</div>
<div class="t" style="left:94.03px;top:712.70px;font-size:18px;color:#444;font-weight:normal;font-style:normal;transform:scaleX(0.9992);transform-origin:0 0;">iv. Event Notifications</div>
<div class="t" style="left:95.11px;top:743.80px;font-size:18px;color:#444;font-weight:normal;font-style:normal;transform:scaleX(0.9489);transform-origin:0 0;">v. User Enhancements</div>
<div class="r" style="left:525px;top:250px;width:1395px;height:511px;background:#e6e6e6;"></div>
<div class="r" style="left:525px;top:250px;width:34px;height:32px;background:#d6d6d6;"></div>
<div class="r" style="left:529px;top:254px;width:25px;height:24px;background:#fcfcfc;"></div>
<svg class="s" style="left:535px;top:263px;" width="12" height="10" viewBox="0 0 12 10"><path d="M1.5 0 V8.5 H11" fill="none" stroke="#6e6e6e" stroke-width="3"/></svg>
<div class="r" style="left:560px;top:255px;width:1179px;height:21px;background:#c6c6c6;"></div>
<div class="r" style="left:694px;top:255px;width:900px;height:21px;background:#ffffff;"></div>
<svg class="s" style="left:560px;top:255px;" width="1180" height="21" viewBox="0 0 1180 21"><rect x="7.2" y="10" width="1.2" height="3" fill="#555"/><rect x="25.2" y="10" width="1.2" height="3" fill="#555"/><rect x="43.2" y="10" width="1.2" height="3" fill="#555"/><rect x="61.2" y="8" width="1" height="8" fill="#555"/><rect x="79.2" y="10" width="1.2" height="3" fill="#555"/><rect x="97.2" y="10" width="1.2" height="3" fill="#555"/><rect x="115.2" y="10" width="1.2" height="3" fill="#555"/><rect x="151.2" y="10" width="1.2" height="3" fill="#555"/><rect x="169.2" y="10" width="1.2" height="3" fill="#555"/><rect x="187.2" y="10" width="1.2" height="3" fill="#555"/><rect x="205.2" y="8" width="1" height="8" fill="#555"/><rect x="223.2" y="10" width="1.2" height="3" fill="#555"/><rect x="241.2" y="10" width="1.2" height="3" fill="#555"/><rect x="259.2" y="10" width="1.2" height="3" fill="#555"/><rect x="295.2" y="10" width="1.2" height="3" fill="#555"/><rect x="313.2" y="10" width="1.2" height="3" fill="#555"/><rect x="331.2" y="10" width="1.2" height="3" fill="#555"/><rect x="349.2" y="8" width="1" height="8" fill="#555"/><rect x="367.2" y="10" width="1.2" height="3" fill="#555"/><rect x="385.2" y="10" width="1.2" height="3" fill="#555"/><rect x="403.2" y="10" width="1.2" height="3" fill="#555"/><rect x="439.2" y="10" width="1.2" height="3" fill="#555"/><rect x="457.2" y="10" width="1.2" height="3" fill="#555"/><rect x="475.2" y="10" width="1.2" height="3" fill="#555"/><rect x="493.2" y="8" width="1" height="8" fill="#555"/><rect x="511.2" y="10" width="1.2" height="3" fill="#555"/><rect x="529.2" y="10" width="1.2" height="3" fill="#555"/><rect x="547.2" y="10" width="1.2" height="3" fill="#555"/><rect x="583.2" y="10" width="1.2" height="3" fill="#555"/><rect x="601.2" y="10" width="1.2" height="3" fill="#555"/><rect x="619.2" y="10" width="1.2" height="3" fill="#555"/><rect x="637.2" y="8" width="1" height="8" fill="#555"/><rect x="655.2" y="10" width="1.2" height="3" fill="#555"/><rect x="673.2" y="10" width="1.2" height="3" fill="#555"/><rect x="691.2" y="10" width="1.2" height="3" fill="#555"/><rect x="727.2" y="10" width="1.2" height="3" fill="#555"/><rect x="745.2" y="10" width="1.2" height="3" fill="#555"/><rect x="763.2" y="10" width="1.2" height="3" fill="#555"/><rect x="781.2" y="8" width="1" height="8" fill="#555"/><rect x="799.2" y="10" width="1.2" height="3" fill="#555"/><rect x="817.2" y="10" width="1.2" height="3" fill="#555"/><rect x="835.2" y="10" width="1.2" height="3" fill="#555"/><rect x="871.2" y="10" width="1.2" height="3" fill="#555"/><rect x="889.2" y="10" width="1.2" height="3" fill="#555"/><rect x="907.2" y="10" width="1.2" height="3" fill="#555"/><rect x="925.2" y="8" width="1" height="8" fill="#555"/><rect x="943.2" y="10" width="1.2" height="3" fill="#555"/><rect x="961.2" y="10" width="1.2" height="3" fill="#555"/><rect x="979.2" y="10" width="1.2" height="3" fill="#555"/><rect x="1015.2" y="10" width="1.2" height="3" fill="#555"/><rect x="1033.2" y="10" width="1.2" height="3" fill="#555"/><rect x="1051.2" y="10" width="1.2" height="3" fill="#555"/><rect x="1069.2" y="8" width="1" height="8" fill="#555"/><rect x="1087.2" y="10" width="1.2" height="3" fill="#555"/><rect x="1105.2" y="10" width="1.2" height="3" fill="#555"/><rect x="1123.2" y="10" width="1.2" height="3" fill="#555"/><rect x="1159.2" y="10" width="1.2" height="3" fill="#555"/></svg>
<div class="t" style="left:832.32px;top:259.88px;font-size:12.5px;color:#444;font-weight:normal;font-style:normal;transform:scaleX(1.4713);transform-origin:0 0;">1</div>
<div class="t" style="left:976.82px;top:259.88px;font-size:12.5px;color:#444;font-weight:normal;font-style:normal;transform:scaleX(1.4066);transform-origin:0 0;">2</div>
<div class="t" style="left:1121.03px;top:259.88px;font-size:12.5px;color:#444;font-weight:normal;font-style:normal;transform:scaleX(1.3474);transform-origin:0 0;">3</div>
<div class="t" style="left:1265.38px;top:259.88px;font-size:12.5px;color:#444;font-weight:normal;font-style:normal;transform:scaleX(1.2673);transform-origin:0 0;">4</div>
<div class="t" style="left:1409.03px;top:259.88px;font-size:12.5px;color:#444;font-weight:normal;font-style:normal;transform:scaleX(1.3474);transform-origin:0 0;">5</div>
<div class="t" style="left:1552.84px;top:259.88px;font-size:12.5px;color:#444;font-weight:normal;font-style:normal;transform:scaleX(1.3763);transform-origin:0 0;">6</div>
<div class="t" style="left:1696.82px;top:259.88px;font-size:12.5px;color:#444;font-weight:normal;font-style:normal;transform:scaleX(1.4066);transform-origin:0 0;">7</div>
<svg class="s" style="left:758px;top:251px;" width="15" height="21" viewBox="0 0 15 21"><path d="M1.5 1.5 H13 V5.5 L7.25 11.5 L1.5 5.5 Z" fill="#fff" stroke="#777" stroke-width="1"/><path d="M7.25 11.5 V20" stroke="#555" stroke-width="1.3"/></svg>
<svg class="s" style="left:794px;top:266px;" width="15" height="20" viewBox="0 0 15 20"><path d="M1.5 18.5 V7 L7.25 1.5 L13 7 V18.5 Z M1.5 12.5 H13" fill="#fff" stroke="#777" stroke-width="1"/></svg>
<svg class="s" style="left:1588px;top:266px;" width="15" height="14" viewBox="0 0 15 14"><path d="M1.5 12.5 V7 L7.25 1.5 L13 7 V12.5 Z" fill="#fff" stroke="#777" stroke-width="1"/></svg>
<div class="r" style="left:530px;top:285px;width:22px;height:476px;background:#ffffff;"></div>
<svg class="s" style="left:530px;top:285px;" width="22" height="476" viewBox="0 0 22 476"><rect x="12" y="3.9" width="3" height="1.2" fill="#555"/><rect x="9" y="21.9" width="8" height="1.2" fill="#555"/><rect x="12" y="39.9" width="3" height="1.2" fill="#555"/><rect x="12" y="57.9" width="3" height="1.2" fill="#555"/><rect x="12" y="75.9" width="3" height="1.2" fill="#555"/><rect x="12" y="111.9" width="3" height="1.2" fill="#555"/><rect x="12" y="129.9" width="3" height="1.2" fill="#555"/><rect x="12" y="147.9" width="3" height="1.2" fill="#555"/><rect x="9" y="165.9" width="8" height="1.2" fill="#555"/><rect x="12" y="183.9" width="3" height="1.2" fill="#555"/><rect x="12" y="201.9" width="3" height="1.2" fill="#555"/><rect x="12" y="219.9" width="3" height="1.2" fill="#555"/><rect x="12" y="255.9" width="3" height="1.2" fill="#555"/><rect x="12" y="273.9" width="3" height="1.2" fill="#555"/><rect x="12" y="291.9" width="3" height="1.2" fill="#555"/><rect x="9" y="309.9" width="8" height="1.2" fill="#555"/><rect x="12" y="327.9" width="3" height="1.2" fill="#555"/><rect x="12" y="345.9" width="3" height="1.2" fill="#555"/><rect x="12" y="363.9" width="3" height="1.2" fill="#555"/><rect x="12" y="399.9" width="3" height="1.2" fill="#555"/><rect x="12" y="417.9" width="3" height="1.2" fill="#555"/><rect x="12" y="435.9" width="3" height="1.2" fill="#555"/><rect x="9" y="453.9" width="8" height="1.2" fill="#555"/><rect x="12" y="471.9" width="3" height="1.2" fill="#555"/></svg>
<div class="t" style="left:537px;top:373.0px;width:10px;height:13px;font-size:14px;color:#444;text-align:center;transform:rotate(-90deg)">1</div>
<div class="t" style="left:537px;top:517.0px;width:10px;height:13px;font-size:14px;color:#444;text-align:center;transform:rotate(-90deg)">2</div>
<div class="t" style="left:537px;top:661.0px;width:10px;height:13px;font-size:14px;color:#444;text-align:center;transform:rotate(-90deg)">3</div>
<div class="r" style="left:560px;top:285px;width:1334px;height:476px;background:#ffffff;"></div>
<div class="r" style="left:1741px;top:285px;width:1px;height:476px;background:#c0c0c0;"></div>
<div class="t" style="left:750.88px;top:307.00px;font-size:20px;color:#2bb5d9;font-weight:normal;font-style:normal;transform:scaleX(1.1983);transform-origin:0 0;">v.</div>
<div class="t" style="left:800.94px;top:307.00px;font-size:20px;color:#2bb5d9;font-weight:normal;font-style:normal;transform:scaleX(1.1084);transform-origin:0 0;">User Enhancements</div>
<div class="t" style="left:746.50px;top:431.00px;font-size:20px;color:#2bb5d9;font-weight:normal;font-style:normal;transform:scaleX(1.0500);transform-origin:0 0;">vi.</div>
<div class="t" style="left:802.60px;top:431.00px;font-size:20px;color:#2bb5d9;font-weight:normal;font-style:normal;transform:scaleX(1.1283);transform-origin:0 0;">Asset Management</div>
<svg class="s" style="left:766px;top:355px;" width="9" height="9" viewBox="0 0 9 9"><circle cx="4.3" cy="4" r="3.9" fill="#1f2343"/></svg>
<div class="t" style="left:802.90px;top:349.00px;font-size:20px;color:#1f2343;font-weight:normal;font-style:normal;transform:scaleX(1.1058);transform-origin:0 0;">All the user fields now display the user’s name along with the email address. If</div>
<div class="t" style="left:802.57px;top:385.00px;font-size:20px;color:#1f2343;font-weight:normal;font-style:normal;transform:scaleX(1.1151);transform-origin:0 0;">the email address is not there, then only the user name will be displayed.</div>
<svg class="s" style="left:766px;top:479px;" width="9" height="9" viewBox="0 0 9 9"><circle cx="4.3" cy="4" r="3.9" fill="#1f2343"/></svg>
<div class="t" style="left:800.95px;top:473.00px;font-size:20px;color:#1f2343;font-weight:normal;font-style:normal;transform:scaleX(1.0827);transform-origin:0 0;">In Network Discovery, SSH Key based authentication is now supported for SSH</div>
<div class="t" style="left:801.80px;top:509.00px;font-size:20px;color:#1f2343;font-weight:normal;font-style:normal;transform:scaleX(1.1050);transform-origin:0 0;">Credentials Type.</div>
<svg class="s" style="left:766px;top:551.5px;" width="9" height="9" viewBox="0 0 9 9"><circle cx="4.3" cy="4" r="3.9" fill="#1f2343"/></svg>
<div class="t" style="left:802.45px;top:545.50px;font-size:20px;color:#1f2343;font-weight:normal;font-style:normal;transform:scaleX(1.1255);transform-origin:0 0;">The user can now filter the hardware asset list based on the agent activation</div>
<div class="t" style="left:802.23px;top:581.00px;font-size:20px;color:#1f2343;font-weight:normal;font-style:normal;transform:scaleX(1.1204);transform-origin:0 0;">status.</div>
<svg class="s" style="left:766px;top:623.4px;" width="9" height="9" viewBox="0 0 9 9"><circle cx="4.3" cy="4" r="3.9" fill="#1f2343"/></svg>
<div class="t" style="left:802.45px;top:617.40px;font-size:20px;color:#1f2343;font-weight:normal;font-style:normal;transform:scaleX(1.1206);transform-origin:0 0;">The user can now download the Asset Depreciation details and store them for</div>
<div class="t" style="left:802.58px;top:653.00px;font-size:20px;color:#1f2343;font-weight:normal;font-style:normal;transform:scaleX(1.0821);transform-origin:0 0;">future use in PDF, Excel, and CSV formats using the Download button.</div>
<svg class="s" style="left:766px;top:695px;" width="9" height="9" viewBox="0 0 9 9"><circle cx="4.3" cy="4" r="3.9" fill="#1f2343"/></svg>
<div class="t" style="left:802.45px;top:689.00px;font-size:20px;color:#1f2343;font-weight:normal;font-style:normal;transform:scaleX(1.1128);transform-origin:0 0;">The user can now view the asset’s architecture using the “</div>
<div class="t" style="left:1373.49px;top:689.00px;font-size:20px;color:#1f2343;font-weight:bold;font-style:normal;transform:scaleX(1.0292);transform-origin:0 0;">Architecture</div>
<div class="t" style="left:1493.07px;top:689.00px;font-size:20px;color:#1f2343;font-weight:normal;font-style:normal;transform:scaleX(1.1662);transform-origin:0 0;">” column</div>
<div class="t" style="left:802.01px;top:725.00px;font-size:20px;color:#1f2343;font-weight:normal;font-style:normal;transform:scaleX(1.1069);transform-origin:0 0;">on the Discovery Agent and Hardware Asset list page..</div>
</body></html>
